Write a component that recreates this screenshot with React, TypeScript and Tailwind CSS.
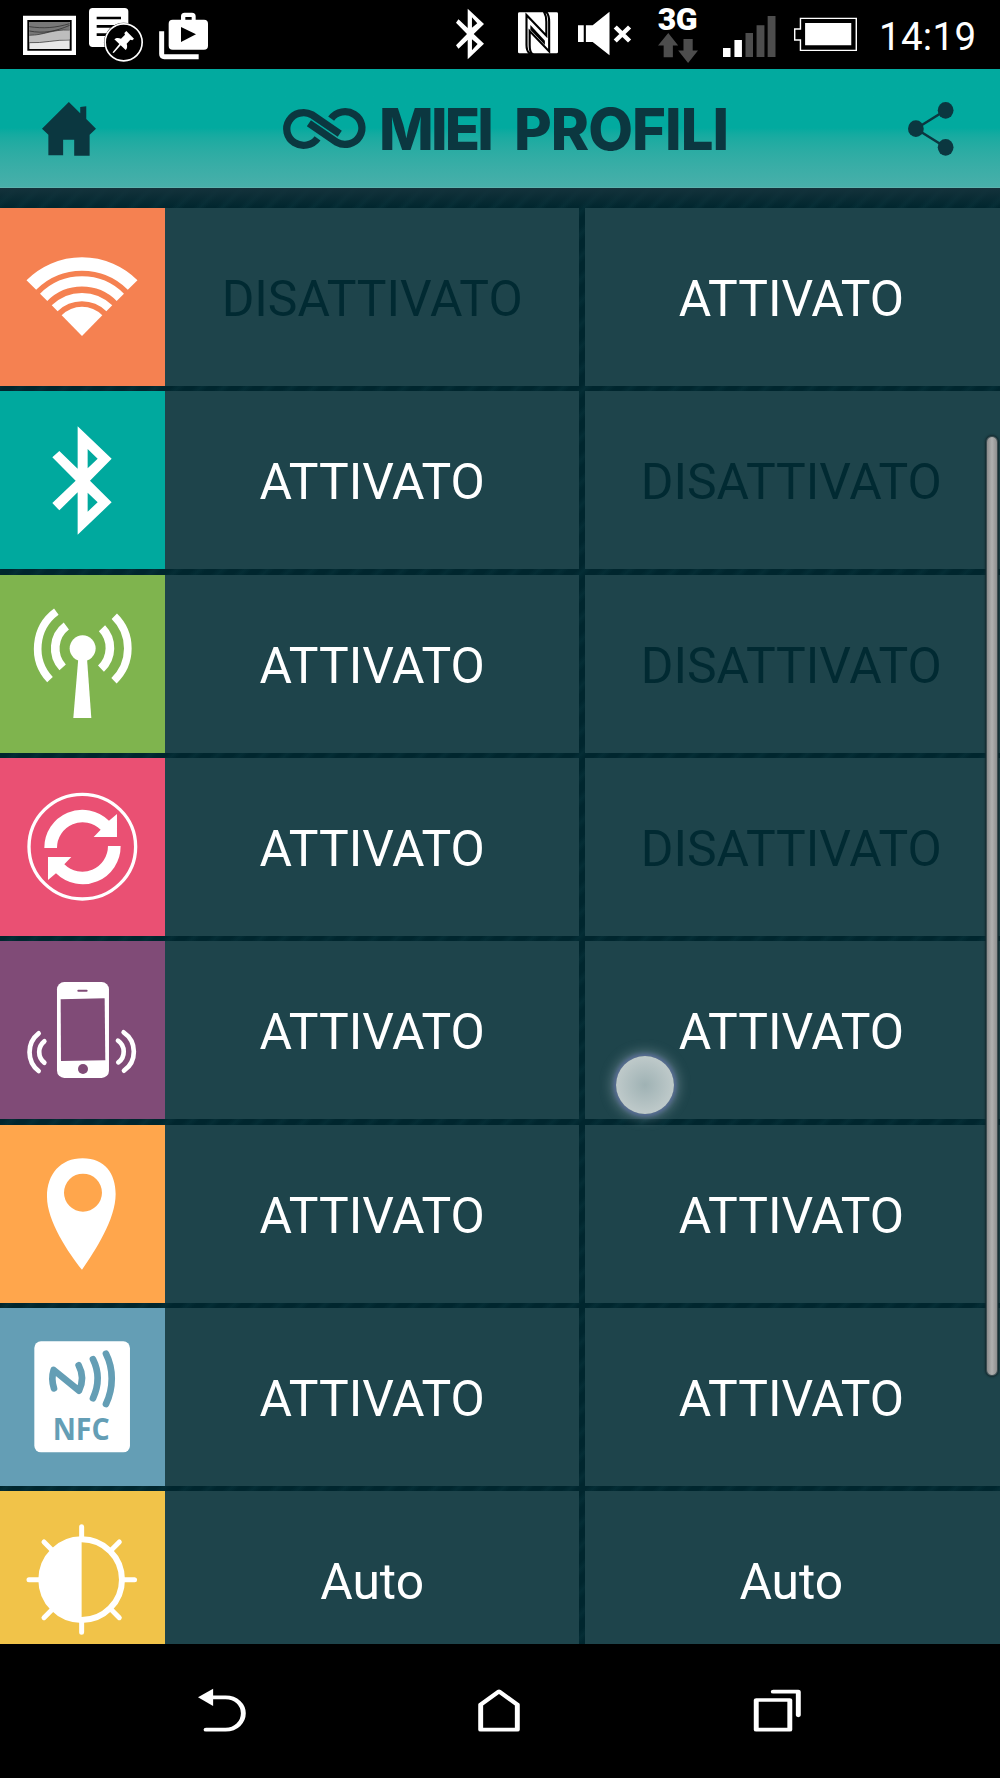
import type { ReactNode } from "react"

interface GlyphProps {
  viewBox: string
  className: string
  children: ReactNode
}

function Glyph({ viewBox, className, children }: GlyphProps) {
  return (
    <svg viewBox={viewBox} preserveAspectRatio="none" fill="currentColor" className={`block shrink-0 overflow-visible ${className}`}>
      {children}
    </svg>
  )
}

const WifiIcon = (
  <>
    <g fill="none" stroke="#fff">
      <path d="M94 231A215 215 0 0 1 398 231" strokeWidth="41" />
      <path d="M131 268A162.500 162.500 0 0 1 361 268" strokeWidth="31" />
      <path d="M164 301A116.500 116.500 0 0 1 328 301" strokeWidth="25" />
    </g>
    <path d="M246 384L185 322A86 86 0 0 1 307 322Z" />
  </>
)

const BluetoothIcon = (
  <path
    fillRule="evenodd"
    d="M233 106L335 203L270 269L335 334L233 431V304L178 358L157 336L227 269L157 199L178 180L233 233ZM263 174V232L293 203ZM263 305V362L293 334Z"
  />
)

const AntennaIcon = (
  <>
    <circle cx="248" cy="220" r="39" />
    <path d="M235 250H261L274 429H220Z" />
    <g fill="none" stroke="#fff">
      <path d="M169 110A137 137 0 0 0 150 314" strokeWidth="23" />
      <path d="M199 153A84 84 0 0 0 188 277" strokeWidth="26" />
      <path d="M306 160A85 85 0 0 1 303 281" strokeWidth="26" />
      <path d="M343 124A134 134 0 0 1 342 317" strokeWidth="23" />
    </g>
  </>
)

const SYNC_ARROW = "M133 270A114 114 0 0 1 327 188L351 168V237H281L302 215A77 77 0 0 0 171 270Z"

const SyncIcon = (
  <>
    <ellipse cx="247" cy="266" rx="160" ry="157" fill="none" stroke="#fff" strokeWidth="10" />
    <path d={SYNC_ARROW} />
    <path d={SYNC_ARROW} transform="rotate(180 247.5 267)" />
  </>
)

const VibrateIcon = (
  <>
    <rect x="171" y="123" width="156" height="288" rx="22" />
    <path d="M182 175L314 172L316 358L183 360Z" fill="#804b77" />
    <path d="M235 149H260" stroke="#804b77" strokeWidth="6" strokeLinecap="round" />
    <circle cx="249" cy="384" r="15" fill="#804b77" />
    <g fill="none" stroke="#fff" strokeWidth="14" strokeLinecap="round">
      <path d="M116 277A72 72 0 0 0 116 390" />
      <path d="M133 301A41 41 0 0 0 133 365" />
      <path d="M354 299A40 40 0 0 1 355 364" />
      <path d="M371 274A70 70 0 0 1 372 389" />
    </g>
  </>
)

const PinIcon = (
  <path
    fillRule="evenodd"
    d="M246 434C205 383 141 288 141 215C141 148 181 100 248 100C315 100 347 147 347 207C347 283 286 376 246 434ZM249 146A57 57 0 1 0 249 260A57 57 0 1 0 249 146Z"
  />
)

const NfcIcon = (
  <>
    <rect x="103" y="100" width="287" height="333" rx="20" />
    <g fill="none" stroke="#649eb5" strokeLinecap="round" strokeLinejoin="round">
      <path d="M162 241C155 220 156 202 161 186L237 248C250 222 249 197 236 172" strokeWidth="20" />
      <path d="M279 154C297 190 297 232 279 271" strokeWidth="20" />
      <path d="M318 137C341 182 341 240 318 288" strokeWidth="20" />
    </g>
    <text
      x="158"
      y="397"
      textLength="171"
      lengthAdjust="spacingAndGlyphs"
      fill="#649eb5"
      className="font-['Open_Sans',sans-serif] text-[89px] font-bold"
    >
      NFC
    </text>
  </>
)

const BrightnessIcon = (
  <>
    <path d="M245 145A121 121 0 0 0 245 387Z" />
    <g fill="none" stroke="#fff">
      <circle cx="245" cy="266" r="121" strokeWidth="18" />
      <path
        strokeWidth="15"
        strokeLinecap="round"
        d="M245 107V145M245 387V424M87 266H124M366 266H404M132 153L158 179M358 153L332 179M358 380L332 354M132 380L158 354"
      />
    </g>
  </>
)

const ON = "ATTIVATO"
const OFF = "DISATTIVATO"

const rows = [
  { id: "wifi", color: "bg-[#f58151]", icon: WifiIcon, values: [OFF, ON] },
  { id: "bluetooth", color: "bg-[#00a99e]", icon: BluetoothIcon, values: [ON, OFF] },
  { id: "data", color: "bg-[#7fb44e]", icon: AntennaIcon, values: [ON, OFF] },
  { id: "sync", color: "bg-[#ea5073]", icon: SyncIcon, values: [ON, OFF] },
  { id: "vibrate", color: "bg-[#804b77]", icon: VibrateIcon, values: [ON, ON] },
  { id: "gps", color: "bg-[#ffa64c]", icon: PinIcon, values: [ON, ON] },
  { id: "nfc", color: "bg-[#649eb5]", icon: NfcIcon, values: [ON, ON] },
  { id: "brightness", color: "bg-[#f1c349]", icon: BrightnessIcon, values: ["Auto", "Auto"] },
]

function StatusBar() {
  return (
    <div className="flex h-[69px] shrink-0 bg-black pl-[23px] text-white">
      <Glyph viewBox="69 0 159 207" className="h-[69px] w-[53px]">
        <path d="M69 47H228V165H69Z" />
        <path d="M82 60H215V152H82Z" fill="#000" />
        <path d="M88 66H209V147H88Z" fill="#e8e8e8" />
        <path d="M88 66H209V89C170 88 150 106 110 104L88 106Z" fill="#777" />
        <path d="M88 106C130 106 155 88 209 89V118C170 120 140 129 88 128Z" fill="#bdbdbd" />
        <path
          d="M88 80C130 86 165 84 209 71M88 93C130 101 165 95 209 76M88 106C130 106 155 88 209 90M88 128C130 130 165 119 209 120"
          fill="none"
          stroke="#222"
          strokeWidth="2"
        />
      </Glyph>
      <Glyph viewBox="267 0 162 207" className="ml-[13px] h-[69px] w-[54px]">
        <rect x="267" y="24" width="118" height="117" rx="11" />
        <path d="M290 54H363M290 79H345M290 104H325" stroke="#000" strokeWidth="8" />
        <circle cx="371" cy="127" r="59" fill="#000" />
        <circle cx="371" cy="127" r="55.500" fill="#000" stroke="#fff" strokeWidth="5" />
        <path d="M379 93L402 116L397 121L391 119L380 131C383 140 381 146 377 150L362 136L342 158L338 159L339 155L358 132L343 118C349 113 356 114 363 116L375 104L373 99Z" />
      </Glyph>
      <Glyph viewBox="475 0 147 207" className="ml-[15.500px] h-[69px] w-[49px]">
        <path
          fillRule="evenodd"
          d="M516 59H541V49Q541 38 552 38H574Q585 38 585 49V59H610Q622 59 622 71V137Q622 149 610 149H516Q504 149 504 137V71Q504 59 516 59ZM554 59H573V51H554ZM541 81V126L586 103Z"
        />
        <path d="M483 94V162Q483 170 491 170H594" fill="none" stroke="#fff" strokeWidth="15" />
      </Glyph>

      <Glyph viewBox="45 0 79 207" className="ml-[248.500px] h-[69px] w-[28px]">
        <path
          fillRule="evenodd"
          d="M78 26L124 72L95 102L124 131L78 178V120L52 146L45 136L76 102L45 68L52 58L78 84ZM90 52V83L105 70ZM90 118V151L106 132Z"
        />
      </Glyph>
      <Glyph viewBox="217 0 113 207" className="ml-[33.500px] h-[69px] w-[40px]">
        <rect x="217" y="37" width="113" height="123" rx="4" />
        <path
          d="M241 45L297 107V65C297 50 295 44 291 37H298C304 45 305 52 305 65V154L250 93V135C250 150 252 156 256 160H249C243 154 241 148 241 135Z"
          fill="#fff"
          stroke="#000"
          strokeWidth="6"
        />
        <path d="M252 75L293 122V135L252 89Z" fill="#000" />
      </Glyph>
      <Glyph viewBox="385 0 148 207" className="ml-[20px] h-[69px] w-[53px]">
        <path d="M385 76H401V126H385ZM407 76H426L473 35V166L426 126H407Z" />
        <path d="M489 81L529 123M529 81L489 123" stroke="#fff" strokeWidth="12" />
      </Glyph>
      <div className="ml-[27px] flex w-[40px] flex-col items-center">
        <span className="mt-[4px] font-[Roboto,sans-serif] text-[32px] leading-[30px] font-black tracking-[-0.5px]">3G</span>
        <Glyph viewBox="610 99 113 89" className="-mt-px h-[30px] w-[40px]">
          <path d="M639 99L667 136H652V171H626V136H610ZM682 117H708V151H723L695 188L667 151H682Z" fill="#4d4d4d" />
        </Glyph>
      </div>
      <Glyph viewBox="791 0 147 207" className="ml-[25px] h-[69px] w-[52.500px]">
        <path d="M791 144H812V171H791ZM823 120H844V171H823Z" />
        <path d="M854 99H875V171H854ZM885 76H907V171H885ZM916 48H938V171H916Z" fill="#4d4d4d" />
      </Glyph>
      <Glyph viewBox="989 0 176 207" className="ml-[18.500px] h-[69px] w-[63px]">
        <path
          d="M1007 55H1163V151H1007V120H991V87H1007Z"
          fill="none"
          stroke="#fff"
          strokeWidth="4"
        />
        <path d="M1020 69H1149V136H1020Z" />
      </Glyph>
      <span className="ml-[22.500px] mt-[14px] font-[Roboto,sans-serif] text-[38.500px] leading-[45px] tracking-[0.3px]">14:19</span>
    </div>
  )
}

function Header() {
  return (
    <div className="flex h-[119px] shrink-0 border-b border-[#5cb3ae] bg-linear-to-b from-[#02aa9f] from-50% to-[#48afaa] pl-[42px] text-[#0b3740]">
      <Glyph viewBox="125 207 161 357" className="h-[119px] w-[54px]">
        <path d="M205 306L239 340V321L257 319V357L286 386L267 404V467H221V419H188V466H144V404L125 386Z" />
      </Glyph>
      <Glyph viewBox="849 207 250 357" className="ml-[187px] h-[119px] w-[83px]">
        <g fill="none" stroke="currentColor" strokeWidth="22">
          <path d="M953 415A51 49 0 1 1 936 344L1020 401" />
          <path d="M994 356A51 49 0 1 1 1011 427L927 370" />
        </g>
      </Glyph>
      <h1 className="ml-[13px] mt-[24px] flex w-[349px] font-[Inter,sans-serif] text-[58px] leading-[72px] font-extrabold whitespace-nowrap">
        <span className="w-[139px] tracking-[-2.800px]">MIEI</span>
        <span className="tracking-[-1px]">PROFILI</span>
      </h1>
      <Glyph viewBox="1310 207 127 357" className="ml-[180px] h-[119px] w-[45.500px]">
        <path d="M1415 331L1332 386L1415 442" fill="none" stroke="currentColor" strokeWidth="7" />
        <ellipse cx="1415" cy="331" rx="22" ry="25" />
        <ellipse cx="1332" cy="386" rx="22" ry="25" />
        <ellipse cx="1415" cy="442" rx="22" ry="25" />
      </Glyph>
    </div>
  )
}

function NavBar() {
  return (
    <div className="flex h-[134px] shrink-0 bg-black pl-[198px] text-white">
      <Glyph viewBox="108 12 108 402" className="h-[134px] w-[48px]">
        <path d="M108 172L142 146V198Z" />
        <path d="M138 172H170C194 172 210 194 210 220C210 246 194 269 170 269H126" fill="none" stroke="#fff" strokeWidth="11" strokeLinecap="round" />
      </Glyph>
      <Glyph viewBox="736 12 94 402" className="ml-[232px] h-[134px] w-[42px]">
        <path d="M742 269V194L783 154L824 194V269Z" fill="none" stroke="#fff" strokeWidth="11" strokeLinejoin="round" />
      </Glyph>
      <Glyph viewBox="1353 12 105 402" className="ml-[234px] h-[134px] w-[47px]">
        <path d="M1358 180H1433V269H1358Z" fill="none" stroke="#fff" strokeWidth="11" strokeLinejoin="round" />
        <path d="M1396 155H1452V226" fill="none" stroke="#fff" strokeWidth="11" strokeLinecap="round" strokeLinejoin="round" />
      </Glyph>
    </div>
  )
}

export default function App() {
  return (
    <div className="flex h-[1778px] w-[1000px] flex-col overflow-hidden bg-black">
      <StatusBar />
      <Header />
      <div className="relative min-h-0 flex-1 overflow-hidden bg-[repeating-linear-gradient(135deg,#00262e_0px,#00262e_6px,#042d35_11px,#00262e_16px)]">
        <div className="h-[20px] bg-linear-to-b from-[#14323b] to-transparent" />
        <div className="flex flex-col gap-[5.330px]">
          {rows.map((row) => (
            <div key={row.id} className="flex h-[178px] shrink-0">
              <div className={`w-[165.300px] shrink-0 text-white ${row.color}`}>
                <Glyph viewBox="0 0 496 534" className="h-full w-full">
                  {row.icon}
                </Glyph>
              </div>
              <div className="grid flex-1 grid-cols-[413.700px_1fr] gap-[5.700px]">
                {row.values.map((value, i) => (
                  <div
                    key={i}
                    className={`flex items-center justify-center bg-[#1e444b] pt-[5px] font-[Roboto,sans-serif] text-[49.800px] ${
                      value === OFF ? "text-[#012a32]" : "text-white"
                    } ${i === 1 ? "pr-[2px]" : ""}`}
                  >
                    {value}
                  </div>
                ))}
              </div>
            </div>
          ))}
        </div>

        {/* touch indicator */}
        <div className="absolute left-[616px] top-[868px] h-[58px] w-[58px] rounded-full bg-[radial-gradient(circle,#9fb2b4_0%,#b3c1c2_45%,#c3cdcd_80%)] shadow-[0_0_4px_2px_#5b6d9c,0_0_12px_5px_rgba(150,170,180,0.45)]" />

        {/* scrollbar */}
        <div className="absolute right-[2px] top-[248px] h-[940px] w-[12px] rounded-full border border-[#3c4c50] bg-linear-to-r from-[#8c8c8c] via-[#b0b0b0] to-[#8f8f8f] shadow-[0_0_2px_1px_#14282d]" />
      </div>
      <NavBar />
    </div>
  )
}
